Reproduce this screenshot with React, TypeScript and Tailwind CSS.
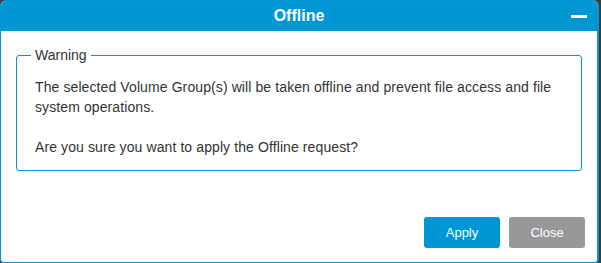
export default function App() {
  return (
    <div className="w-[601px] h-[263px] bg-[#3d3d3d] font-['Liberation_Sans',Arial,sans-serif]">
      <div className="w-[599px] h-[263px] flex flex-col bg-white border border-r-2 border-[#0a93d4] rounded-t-[6px] rounded-b-[4px] overflow-hidden">
        <div className="relative h-[30px] shrink-0 bg-[#0096d6] flex items-center justify-center">
          <span className="text-white font-bold text-[16px] leading-none">Offline</span>
          <div className="absolute right-[10px] top-[14px] w-[16px] h-[3px] bg-white" />
        </div>

        <fieldset className="mt-[14px] mx-[15px] border border-[#0a93d4] rounded-[3px] pl-[18px] pr-[14px] pb-[13px] text-[14px] leading-[20px] text-[#333]">
          <legend className="ml-[-4px] px-[4px]">Warning</legend>
          <p className="mt-[12px] tracking-[0.1px]">
            The selected Volume Group(s) will be taken offline and prevent file access and file system operations.
          </p>
          <p className="mt-[20px] tracking-[0.1px]">Are you sure you want to apply the Offline request?</p>
        </fieldset>

        <div className="flex-1" />

        <div className="flex justify-end gap-[9px] pr-[12px] pb-[14px]">
          <button className="w-[76px] h-[31px] rounded-[3px] bg-[#0096d6] text-white text-[13px]">Apply</button>
          <button className="w-[76px] h-[31px] rounded-[3px] bg-[#98989a] text-white text-[13px]">Close</button>
        </div>
      </div>
    </div>
  );
}
